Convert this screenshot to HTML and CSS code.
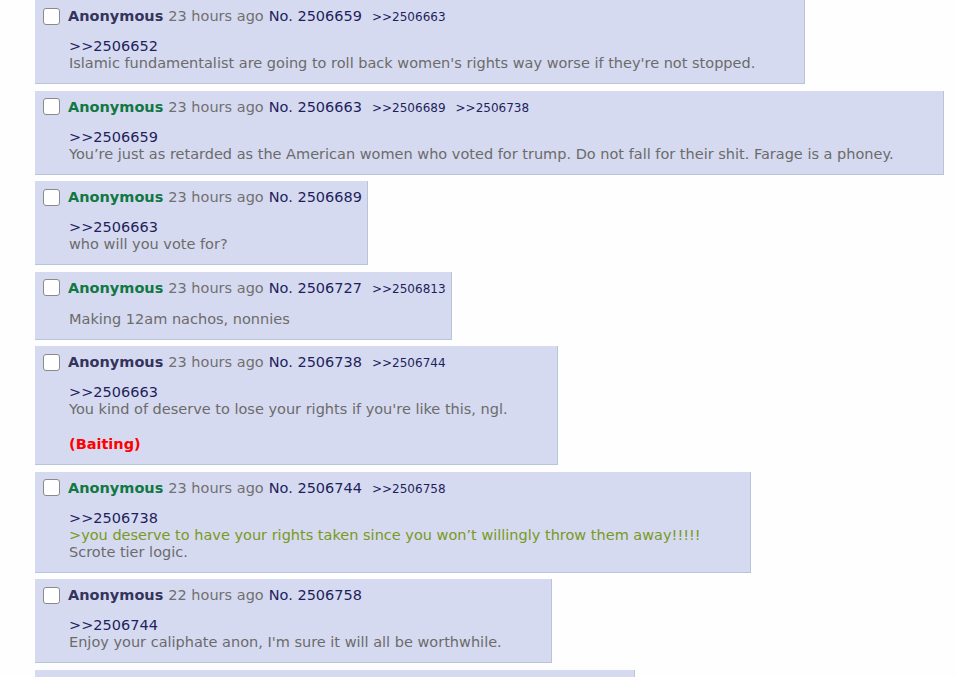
FILE: index.html
```html
<!DOCTYPE html>
<html>
<head>
	<title>Thread</title>
	<link rel="stylesheet" href="styles.css">
</head>
<body>

<div class="thread">

	<div class="post">
		<div class="head">
			<span class="check"></span>
			<span class="name">Anonymous</span>
			<span class="time">23 hours ago</span>
			<span class="num">No. 2506659</span>
			<span class="backlinks"><a>&gt;&gt;2506663</a></span>
		</div>
		<div class="message">
			<a class="quote">&gt;&gt;2506652</a><br>
			Islamic fundamentalist are going to roll back women's rights way worse if they're not stopped.
		</div>
	</div>

	<div class="post">
		<div class="head">
			<span class="check"></span>
			<span class="name op">Anonymous</span>
			<span class="time">23 hours ago</span>
			<span class="num">No. 2506663</span>
			<span class="backlinks"><a>&gt;&gt;2506689</a><a>&gt;&gt;2506738</a></span>
		</div>
		<div class="message">
			<a class="quote">&gt;&gt;2506659</a><br>
			You’re just as retarded as the American women who voted for trump. Do not fall for their shit. Farage is a phoney.
		</div>
	</div>

	<div class="post">
		<div class="head">
			<span class="check"></span>
			<span class="name op">Anonymous</span>
			<span class="time">23 hours ago</span>
			<span class="num">No. 2506689</span>
		</div>
		<div class="message">
			<a class="quote">&gt;&gt;2506663</a><br>
			who will you vote for?
		</div>
	</div>

	<div class="post">
		<div class="head">
			<span class="check"></span>
			<span class="name op">Anonymous</span>
			<span class="time">23 hours ago</span>
			<span class="num">No. 2506727</span>
			<span class="backlinks"><a>&gt;&gt;2506813</a></span>
		</div>
		<div class="message plain">
			Making 12am nachos, nonnies
		</div>
	</div>

	<div class="post">
		<div class="head">
			<span class="check"></span>
			<span class="name">Anonymous</span>
			<span class="time">23 hours ago</span>
			<span class="num">No. 2506738</span>
			<span class="backlinks"><a>&gt;&gt;2506744</a></span>
		</div>
		<div class="message">
			<a class="quote">&gt;&gt;2506663</a><br>
			You kind of deserve to lose your rights if you're like this, ngl.<br>
			<br>
			<span class="mod">(Baiting)</span>
		</div>
	</div>

	<div class="post">
		<div class="head">
			<span class="check"></span>
			<span class="name op">Anonymous</span>
			<span class="time">23 hours ago</span>
			<span class="num">No. 2506744</span>
			<span class="backlinks"><a>&gt;&gt;2506758</a></span>
		</div>
		<div class="message">
			<a class="quote">&gt;&gt;2506738</a><br>
			<span class="green">&gt;you deserve to have your rights taken since you won’t willingly throw them away!!!!!</span><br>
			Scrote tier logic.
		</div>
	</div>

	<div class="post">
		<div class="head">
			<span class="check"></span>
			<span class="name">Anonymous</span>
			<span class="time">22 hours ago</span>
			<span class="num">No. 2506758</span>
		</div>
		<div class="message">
			<a class="quote">&gt;&gt;2506744</a><br>
			Enjoy your caliphate anon, I'm sure it will all be worthwhile.
		</div>
	</div>

	<div class="post">
		<div class="head">
			<span class="check"></span>
			<span class="name">Anonymous</span>
			<span class="time">22 hours ago</span>
			<span class="num">No. 2506760</span>
		</div>
		<div class="message">
			<a class="quote">&gt;&gt;2506758</a><br>
			It's not like they'd be treated any better anywhere else, honestly anon.
		</div>
	</div>

</div>

</body>
</html>
```

FILE: styles.css
```css
body {
	margin: 0;
	background: #fefefe;
	font-family: "DejaVu Sans", Verdana, sans-serif;
	font-size: 14.5px;
	color: #6b6b6b;
}

.thread {
	display: flex;
	flex-direction: column;
	align-items: flex-start;
	gap: 6.5px;
	padding-left: 35px;
}

.post {
	background: #d6daf0;
	border-right: 1px solid #b7c5d9;
	border-bottom: 1px solid #b7c5d9;
	padding: 4px 5px 0 8px;
}

.head {
	display: flex;
	align-items: center;
	height: 24px;
	white-space: nowrap;
}

.check {
	width: 15px;
	height: 15px;
	border: 1px solid #8a8a8a;
	border-radius: 3px;
	background: #fff;
	margin-right: 8px;
}

.name {
	font-weight: bold;
	color: #34345c;
	margin-right: 5px;
}

.name.op {
	color: #117743;
}

.time {
	color: #707070;
	margin-right: 5px;
}

.num {
	color: #1f1f5c;
}

.backlinks a {
	font-size: 12px;
	color: #1f1f5c;
	margin-left: 10px;
}

.message {
	margin: 10px 44px 11px 26px;
	line-height: 17px;
}

.message.plain {
	margin-top: 11px;
}

.quote {
	color: #1f1f5c;
}

.green {
	color: #789922;
}

.mod {
	color: #ff0000;
	font-weight: bold;
	line-height: 18px;
}
```
